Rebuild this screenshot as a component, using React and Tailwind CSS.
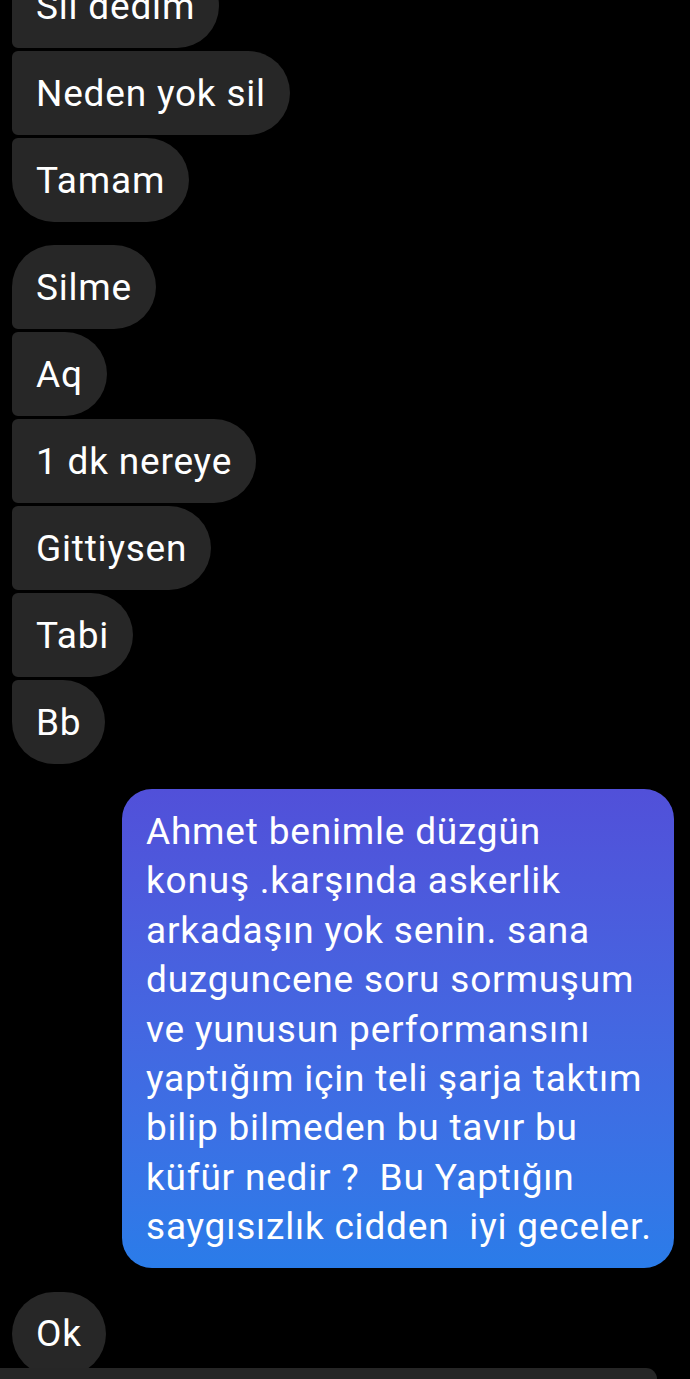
import React from "react";

const font = { fontFamily: "Roboto, 'Noto Sans', Arial, sans-serif" };

function Bubble({ text, first, last, round }) {
  let corners = "rounded-r-[42px] rounded-l-[6px]";
  if (round) corners = "rounded-full";
  else if (first && last) corners = "rounded-[42px]";
  else if (first) corners = "rounded-r-[42px] rounded-tl-[42px] rounded-bl-[6px]";
  else if (last) corners = "rounded-r-[42px] rounded-tl-[6px] rounded-bl-[42px]";
  return (
    <div
      className={`self-start h-[84px] flex items-center px-6 bg-[#272727] text-white text-[37px] tracking-[0.8px] leading-none whitespace-nowrap ${corners}`}
    >
      {text}
    </div>
  );
}

const blueLines = [
  "Ahmet benimle düzgün",
  "konuş .karşında askerlik",
  "arkadaşın yok senin. sana",
  "duzguncene soru sormuşum",
  "ve yunusun performansını",
  "yaptığım için teli şarja taktım",
  "bilip bilmeden bu tavır bu",
  "küfür nedir ?  Bu Yaptığın",
  "saygısızlık cidden  iyi geceler.",
];

export default function App() {
  return (
    <div className="relative w-[690px] h-[1379px] bg-black overflow-hidden" style={font}>
      <div className="flex flex-col px-3 -mt-[36px]">
        <div className="flex flex-col gap-[3px]">
          <Bubble text="Sil dedim" />
          <Bubble text="Neden yok sil" />
          <Bubble text="Tamam" last />
        </div>
        <div className="flex flex-col gap-[3px] mt-[23px]">
          <Bubble text="Silme" first />
          <Bubble text="Aq" />
          <Bubble text="1 dk nereye" />
          <Bubble text="Gittiysen" />
          <Bubble text="Tabi" />
          <Bubble text="Bb" last />
        </div>
        <div className="self-end mr-1 mt-[25px] w-[552px] rounded-[30px] bg-gradient-to-b from-[#5150d9] to-[#2a7ce9] pl-6 pr-4 pt-[18px] pb-[16px] text-white text-[37px] tracking-[0.8px] leading-[49.4px] whitespace-pre">
          {blueLines.map((l, i) => (
            <div key={i}>{l}</div>
          ))}
        </div>
        <div className="flex mt-[24px]">
          <Bubble text="Ok" round />
        </div>
      </div>
      <div className="absolute left-0 bottom-0 w-[657px] h-[11px] bg-[#262626] rounded-tr-[24px]" />
    </div>
  );
}
